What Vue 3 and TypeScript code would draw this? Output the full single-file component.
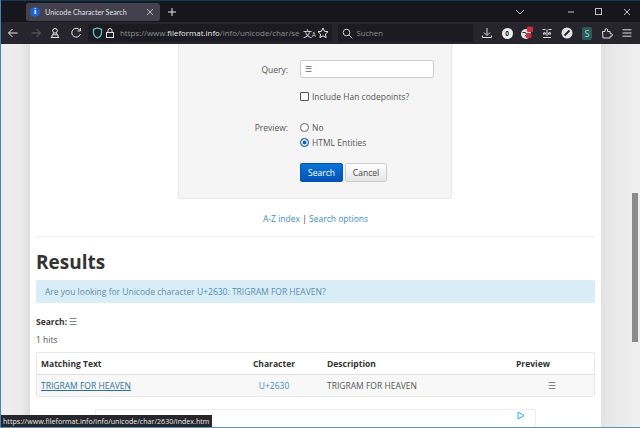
<script setup lang="ts">
const headers = ['Matching Text', 'Character', 'Description', 'Preview']
</script>

<template>
  <div class="window">
    <header class="chrome">
      <div class="tabstrip">
        <div class="tab">
          <span class="favicon">i</span>
          <span class="tab-title">Unicode Character Search</span>
          <svg class="tab-close" width="8" height="8" viewBox="0 0 8 8"><path d="M1 1l6 6M7 1L1 7" /></svg>
        </div>
        <svg class="new-tab" width="10" height="10" viewBox="0 0 10 10"><path d="M5 1v8M1 5h8" /></svg>
        <div class="spacer"></div>
        <svg class="ctl chev" width="10" height="6" viewBox="0 0 10 6"><path d="M1 1l4 4 4-4" /></svg>
        <div class="winbtns">
          <svg class="ctl" width="10" height="10" viewBox="0 0 10 10"><path d="M2 5h6" /></svg>
          <svg class="ctl" width="10" height="10" viewBox="0 0 10 10"><rect x="1.5" y="1.5" width="6" height="6" /></svg>
          <svg class="ctl" width="10" height="10" viewBox="0 0 10 10"><path d="M2 2l6 6M8 2l-6 6" /></svg>
        </div>
      </div>
      <div class="toolbar">
        <div class="nav">
          <svg width="12" height="12" viewBox="0 0 12 12"><path d="M10.5 6h-9M5.5 2l-4 4 4 4" /></svg>
          <svg class="dim" width="12" height="12" viewBox="0 0 12 12"><path d="M1.5 6h9M6.5 2l4 4-4 4" /></svg>
          <svg width="12" height="12" viewBox="0 0 12 12"><circle cx="6" cy="3.800" r="2.300" /><path d="M4.500 6l-1 1.800h5L7.500 6M1.800 10.500h8.400M3 8v2.500M9 8v2.500" /></svg>
          <svg width="12" height="12" viewBox="0 0 12 12"><path d="M10 3.500A4.400 4.400 0 1 0 10.400 7M10.500 1v3h-3" /></svg>
        </div>
        <div class="urlbar">
          <svg class="shield" width="11" height="12" viewBox="0 0 11 12"><path d="M5.500 1l4 1.300v3.500c0 2.500-1.700 4.200-4 5.200-2.300-1-4-2.700-4-5.200V2.300z" /></svg>
          <svg width="10" height="12" viewBox="0 0 10 12"><rect x="1.500" y="5.500" width="7" height="5" /><path d="M3 5.500V3.500a2 2 0 0 1 4 0v2" /></svg>
          <span class="url">https://www.<b>fileformat.info</b>/info/unicode/char/se</span>
          <span class="translate">文<small>A</small></span>
          <svg class="star" width="12" height="12" viewBox="0 0 12 12"><path d="M6 1l1.500 3.300 3.500.4-2.600 2.400.7 3.500L6 8.800l-3.100 1.800.7-3.500L1 4.700l3.500-.4z" /></svg>
        </div>
        <div class="searchbar">
          <svg width="11" height="11" viewBox="0 0 11 11"><circle cx="4.500" cy="4.500" r="3.300" /><path d="M7 7l3.300 3.300" /></svg>
          <span>Suchen</span>
        </div>
        <div class="tools">
          <svg width="12" height="12" viewBox="0 0 12 12"><path d="M6 1v7M3 5.500L6 8.500l3-3M1.500 8.500v2h9v-2" /></svg>
          <span class="badge-round">0</span>
          <svg class="globe" width="14" height="14" viewBox="0 0 14 14">
            <circle class="solid" cx="6" cy="8" r="5" />
            <path class="dark" d="M2.500 6.500h3l1 2-1.500 2" />
            <rect class="red" x="7" y="0.500" width="6" height="5.500" rx="1" />
            <rect class="red" x="6" y="7" width="5.500" height="5" rx="1" />
          </svg>
          <svg width="12" height="12" viewBox="0 0 12 12"><path d="M1.500 2.500h3M7.500 2.500h3M6 2.500v6.500M2 10.500h8M3.500 5l-1.500 2h3zM8.500 5l-1.500 2h3z" /></svg>
          <svg class="ban" width="12" height="12" viewBox="0 0 12 12"><circle class="solid" cx="6" cy="6" r="5.500" /><path class="dark thick" d="M3.500 8.500l5-5" /></svg>
          <span class="ext-s">S</span>
          <svg width="12" height="12" viewBox="0 0 12 12"><path d="M1.500 4.500h2.500V3a1.300 1.300 0 0 1 2.600 0v1.500h2.500v2.200h1a1.300 1.300 0 0 1 0 2.600h-1v1.700h-7.100z" /></svg>
          <svg width="12" height="12" viewBox="0 0 12 12"><path d="M1.500 2.800h9M1.500 6h9M1.500 9.200h9" /></svg>
        </div>
      </div>
    </header>

    <div class="viewport">
      <div class="gutter"></div>
      <main class="page">
        <section class="panel">
          <div class="row query">
            <label class="lbl">Query:</label>
            <div class="input">☰</div>
          </div>
          <div class="row han">
            <span class="lbl"></span>
            <span class="check"></span>
            <span>Include Han codepoints?</span>
          </div>
          <div class="row">
            <span class="lbl">Preview:</span>
            <span class="radio"></span>
            <span>No</span>
          </div>
          <div class="row">
            <span class="lbl"></span>
            <span class="radio on"></span>
            <span>HTML Entities</span>
          </div>
          <div class="row actions">
            <span class="lbl"></span>
            <button class="btn primary">Search</button>
            <button class="btn">Cancel</button>
          </div>
        </section>

        <p class="links"><a>A-Z index</a> | <a>Search options</a></p>
        <hr />
        <h1>Results</h1>
        <div class="alert">Are you looking for Unicode character <a>U+2630</a>: TRIGRAM FOR HEAVEN?</div>
        <p class="search-line"><b>Search:</b> <span class="tri">☰</span></p>
        <p class="hits">1 hits</p>

        <div class="table">
          <div class="tr head">
            <div v-for="h in headers" :key="h" class="td">{{ h }}</div>
          </div>
          <div class="tr body">
            <div class="td"><a class="u">TRIGRAM FOR HEAVEN</a></div>
            <div class="td"><a>U+2630</a></div>
            <div class="td">TRIGRAM FOR HEAVEN</div>
            <div class="td tri">☰</div>
          </div>
        </div>

        <div class="ad">
          <svg width="8" height="9" viewBox="0 0 8 9"><path d="M1 1l6 3.500-6 3.500z" /></svg>
        </div>
      </main>
      <div class="gutter right"></div>
      <div class="scrollbar"><div class="thumb"></div></div>
      <div class="status">https://www.fileformat.info/info/unicode/char/2630/index.htm</div>
    </div>
  </div>
</template>

<style>
html, body { margin: 0; padding: 0; overflow: hidden; background: #2e7ca8; }
</style>

<style scoped>
.window {
  width: 640px; height: 428px; display: flex; flex-direction: column; overflow: hidden;
  box-sizing: border-box; border-left: 1px solid #3f86b4; border-bottom: 1px solid #5a93b4;
  font-family: "Open Sans", "Noto Sans", sans-serif; color: #555; font-size: 8.500px;
}
.chrome { flex: none; background: #1c1b22; color: #e6e6ea; border-top: 1px solid #123a55; }
svg { fill: none; stroke: currentColor; stroke-width: 1; flex: none; }
.tabstrip { height: 21px; display: flex; align-items: center; background: #17161c; padding-left: 25px; }
.tab {
  width: 134px; height: 18px; align-self: flex-start; margin-top: 2px; box-sizing: border-box; background: #42414d; border-radius: 3px;
  display: flex; align-items: center; padding: 0 6px 0 4px; gap: 5px;
}
.favicon {
  width: 10px; height: 10px; border-radius: 50%; background: #1c62d0; color: #fff; font: bold 8px/10px "Liberation Serif", serif;
  text-align: center; flex: none;
}
.tab-title { flex: 1; font: 7.200px "Lato", sans-serif; white-space: nowrap; color: #e0e0e4; }
.tab-close { color: #bbb; }
.new-tab { margin-left: 7px; }
.spacer { flex: 1; }
.chev { color: #ccc; margin-right: 41px; }
.winbtns { display: flex; gap: 18px; margin-right: 8px; color: #ccc; }
.ctl { color: #bdbdc2; }
.toolbar { height: 22px; display: flex; align-items: center; background: #26252d; }
.nav { display: flex; align-items: center; padding-left: 6px; width: 87px; box-sizing: border-box; }
.nav svg:nth-child(2) { margin-left: 11px; color: #66656c; }
.nav svg:nth-child(3) { margin-left: 7px; }
.nav svg:nth-child(4) { margin-left: 9px; }
.urlbar {
  width: 244px; height: 18px; background: #1c1b22; display: flex; align-items: center; border-radius: 2px;
  padding-left: 4px; box-sizing: border-box; overflow: hidden;
}
.urlbar svg:nth-child(2) { margin-left: 2px; }
.urlbar .shield { color: #5cc4c4; stroke-width: 1.300; }
.url { color: #8d8d92; font-size: 7.900px; white-space: nowrap; width: 183px; margin-left: 5px; flex: none; }
.url b { color: #e8e8ea; font-weight: 400; }
.translate { font: 9px "Noto Sans CJK SC", sans-serif; white-space: nowrap; color: #ddd; width: 13px; flex: none; }
.translate small { font-size: 6px; }
.star { margin-left: 1px; }
.searchbar {
  width: 135px; height: 18px; margin-left: 6px; background: #1c1b22; display: flex; align-items: center; border-radius: 2px;
  gap: 3.500px; padding-left: 4px; box-sizing: border-box; font-size: 7.700px; color: #8f8f94;
}
.searchbar svg { color: #ccc; }
.tools { display: grid; grid-template-columns: repeat(8, 20px); justify-items: center; align-items: center; padding-left: 4px; color: #ddd; }
.badge-round { width: 11px; height: 11px; border-radius: 50%; background: #eee; color: #222; font-size: 6.500px; font-weight: 700; line-height: 11px; text-align: center; }
.solid { fill: #e4e4e4; stroke: none; }
.dark { stroke: #26252d; }
.thick { stroke-width: 2; }
.red { fill: #c5303c; stroke: none; }
.ext-s { width: 10px; height: 13px; background: #2c5a58; color: #9fd8cf; font-size: 9px; line-height: 13px; text-align: center; border-radius: 2px; }

.viewport { flex: 1; min-height: 0; display: flex; position: relative; background: #e8e8e8; }
.gutter { width: 29px; flex: none; background: linear-gradient(90deg, #eeeeee 0, #ebebeb 72%, #dcdcdc 100%); }
.gutter.right { width: 31px; background: linear-gradient(90deg, #e2e2e2 0, #e8e8e8 30%, #ededed 100%); }
.page { width: 571px; flex: none; background: #fff; padding: 0 6px; box-sizing: border-box; position: relative; }
.scrollbar { width: 8px; flex: none; background: #efefef; padding-top: 149px; box-sizing: border-box; }
.thumb { width: 6px; height: 149px; margin-left: 0; background: #8b8b8b; }

.panel {
  width: 274px; height: 155px; margin-left: 142px; box-sizing: border-box;
  background: #f5f5f5; border: 1px solid #e8e8e8; border-top: 0; border-radius: 0 0 3px 3px;
  padding-top: 16px;
}
.row { display: flex; align-items: center; height: 15px; }
.lbl { width: 109px; text-align: right; margin-right: 12px; flex: none; color: #555; }
.query { height: 18px; }
.input {
  width: 134px; height: 18px; box-sizing: border-box; background: #fff; border: 1px solid #ccc; border-radius: 2px;
  font-size: 8px; line-height: 16px; padding-left: 4px; color: #666;
}
.han { margin-top: 11px; margin-bottom: 16px; }
.check, .radio { width: 9px; height: 9px; box-sizing: border-box; border: 1px solid #555; background: #fff; margin-right: 3px; flex: none; }
.check { border-radius: 1px; }
.radio { border-radius: 50%; border-color: #666; }
.radio.on { border-color: #0b62c4; box-shadow: inset 0 0 0 1.500px #fff; background: #0b62c4; }
.actions { margin-top: 13px; height: 19px; }
.btn {
  height: 19px; width: 42px; padding: 0; border: 1px solid #ccc; border-radius: 2px; font: 8.500px "Open Sans", sans-serif;
  background: linear-gradient(#fff, #e6e6e6); color: #444;
}
.primary { width: 43px; margin-right: 2px; background: linear-gradient(#0a75d8, #0553b4); color: #fff; border-color: #0553b4; }

.links { margin: 13px 0 0; text-align: center; color: #333; line-height: 14px; }
a { color: #3a8fc0; }
.u { text-decoration: underline; color: #2a6f9e; }
hr { border: 0; border-top: 1px solid #eee; margin: 10px 0 0; }
h1 { margin: 12px 0 0; font-size: 19px; line-height: 27px; font-weight: 700; color: #333; }
.alert {
  margin-top: 4px; height: 23px; background: #d9edf7; border-radius: 2px; line-height: 23px; padding-left: 9px; color: #5b8fae;
}
.search-line { margin: 12px 0 0; line-height: 13px; }
.search-line b { color: #333; font-weight: 700; }
.tri { color: #666; }
.hits { margin: 5px 0 0; line-height: 14px; }
.table { margin-top: 5px; border: 1px solid #e8e8e8; border-radius: 2px; }
.tr { display: grid; grid-template-columns: 188px 98px 189px 1fr; align-items: center; }
.head { height: 22px; font-weight: 700; color: #333; border-bottom: 1px solid #e0e0e0; box-sizing: border-box; }
.head .td:nth-child(2) { text-align: center; }
.body { height: 21px; background: #f8f8f8; }
.td { padding-left: 4px; }
.td:nth-child(2) { padding-left: 0; }
.body .td:nth-child(2) { text-align: center; }
.body .td:last-child { padding-left: 36px; }
.ad { width: 441px; height: 19px; margin: 12px 0 0 59px; border: 1px solid #eee; border-bottom: 0; box-sizing: border-box; display: flex; justify-content: flex-end; padding: 1px 10px 0 0; color: #25b4d8; }
.status {
  position: absolute; left: 0; bottom: -1px; height: 13px; padding: 0 3px 0 2px; background: #26262c; color: #e8e8e8;
  font-size: 7.100px; line-height: 13px; white-space: nowrap;
}
</style>
